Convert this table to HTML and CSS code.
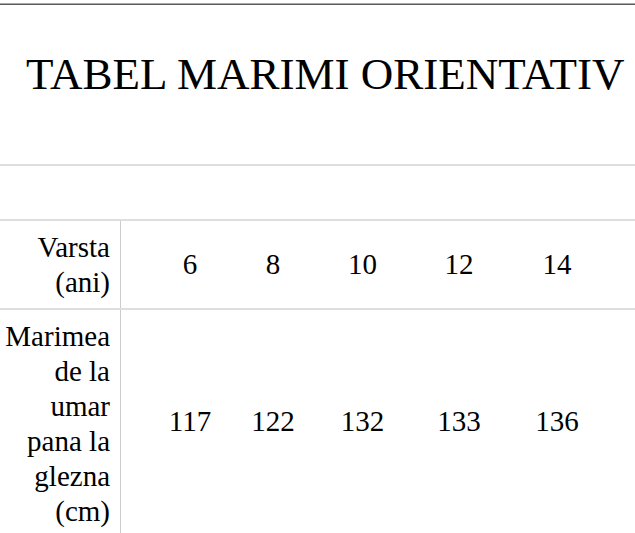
FILE: index.html
```html
<!DOCTYPE html>
<html lang="ro">
<head>
<meta charset="utf-8">
<title>Tabel marimi</title>
<link rel="stylesheet" href="styles.css">
</head>
<body>
<div class="page">
  <div class="topline"></div>
  <div class="row title-row">
    <h1 class="title">TABEL MARIMI ORIENTATIV</h1>
  </div>
  <div class="row empty-row"></div>
  <div class="row grid head-row">
    <div class="label">Varsta<br>(ani)</div>
    <div class="num c1">6</div>
    <div class="num">8</div>
    <div class="num">10</div>
    <div class="num">12</div>
    <div class="num">14</div>
    <div class="num"></div>
  </div>
  <div class="row grid data-row">
    <div class="label">Marimea<br>de la<br>umar<br>pana la<br>glezna<br>(cm)</div>
    <div class="num c1">117</div>
    <div class="num">122</div>
    <div class="num">132</div>
    <div class="num">133</div>
    <div class="num">136</div>
    <div class="num"></div>
  </div>
</div>
</body>
</html>
```

FILE: styles.css
```css
html, body {
  margin: 0;
  padding: 0;
  background: #ffffff;
  overflow: hidden;
}
body {
  font-family: "Liberation Serif", "Times New Roman", serif;
  color: #000;
}
.page {
  width: 635px;
  padding-top: 3px;
}
.topline {
  height: 2px;
  background: linear-gradient(#a8a8a8 50%, #5c5c5c 50%);
}
.row {
  border-bottom: 2px solid #dedede;
}
.title-row {
  height: 161px;
  box-sizing: border-box;
  padding: 44px 0 0 26px;
}
.title {
  margin: 0;
  font-weight: normal;
  font-size: 45px;
  line-height: 51px;
  white-space: nowrap;
}
.empty-row {
  height: 53px;
}
.grid {
  display: grid;
  grid-template-columns: 121px 110px 84px 95px 98px 98px 1fr;
  font-size: 29px;
  line-height: 35px;
}
.label {
  border-right: 1px solid #cccccc;
  text-align: right;
  padding-right: 10px;
  display: flex;
  align-items: center;
  justify-content: flex-end;
}
.num {
  display: flex;
  align-items: center;
  justify-content: center;
}
.num.c1 {
  padding-left: 28px;
}
.head-row {
  height: 87px;
}
.data-row .label {
  padding-top: 9px;
  padding-bottom: 9px;
}
.data-row .num {
  padding-bottom: 6px;
}
```
